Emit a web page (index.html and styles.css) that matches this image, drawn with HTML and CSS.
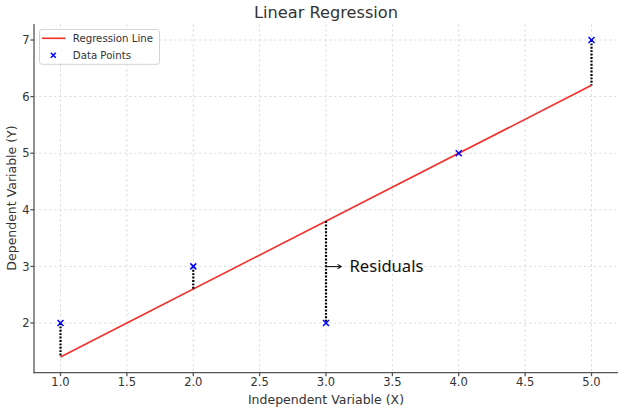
FILE: index.html
```html
<!DOCTYPE html>
<html lang="en">
<head>
<meta charset="utf-8">
<title>Linear Regression</title>
<link rel="stylesheet" href="styles.css">
</head>
<body>
<figure class="figure">
<svg class="chart" width="624" height="412" viewBox="0 0 624 412" xmlns="http://www.w3.org/2000/svg">
  <!-- grid -->
  <g class="grid">
    <line x1="60.5" y1="24" x2="60.5" y2="372.5"/>
    <line x1="126.9" y1="24" x2="126.9" y2="372.5"/>
    <line x1="193.3" y1="24" x2="193.3" y2="372.5"/>
    <line x1="259.6" y1="24" x2="259.6" y2="372.5"/>
    <line x1="326" y1="24" x2="326" y2="372.5"/>
    <line x1="392.4" y1="24" x2="392.4" y2="372.5"/>
    <line x1="458.7" y1="24" x2="458.7" y2="372.5"/>
    <line x1="525.1" y1="24" x2="525.1" y2="372.5"/>
    <line x1="591.5" y1="24" x2="591.5" y2="372.5"/>
    <line x1="34" y1="40" x2="618" y2="40"/>
    <line x1="34" y1="96.6" x2="618" y2="96.6"/>
    <line x1="34" y1="153.2" x2="618" y2="153.2"/>
    <line x1="34" y1="209.8" x2="618" y2="209.8"/>
    <line x1="34" y1="266.4" x2="618" y2="266.4"/>
    <line x1="34" y1="323" x2="618" y2="323"/>
  </g>

  <!-- regression line -->
  <line class="reg" x1="60.5" y1="357" x2="591.5" y2="85.3"/>

  <!-- residuals -->
  <g class="resid">
    <line x1="60.5" y1="323" x2="60.5" y2="357"/>
    <line x1="193.3" y1="266.4" x2="193.3" y2="289"/>
    <line x1="326" y1="221.1" x2="326" y2="323"/>
    <line x1="591.5" y1="40" x2="591.5" y2="85.3"/>
  </g>

  <!-- data points -->
  <g class="pts">
    <path d="M57.5 320 l6 6 M63.5 320 l-6 6"/>
    <path d="M190.3 263.4 l6 6 M196.3 263.4 l-6 6"/>
    <path d="M323 320 l6 6 M329 320 l-6 6"/>
    <path d="M455.7 150.2 l6 6 M461.7 150.2 l-6 6"/>
    <path d="M588.5 37 l6 6 M594.5 37 l-6 6"/>
  </g>

  <!-- annotation -->
  <g class="annot">
    <line x1="326" y1="266.6" x2="341" y2="266.6"/>
    <path d="M337.5 264.4 L341.2 266.6 L337.5 268.8"/>
  </g>
  <text class="annot-text" x="349.5" y="272.4">Residuals</text>

  <!-- spines and ticks -->
  <g class="spine">
    <line x1="34" y1="24" x2="34" y2="373.2"/>
    <line x1="33.4" y1="372.6" x2="618" y2="372.6"/>
    <line x1="60.5" y1="372.6" x2="60.5" y2="376.2"/>
    <line x1="126.9" y1="372.6" x2="126.9" y2="376.2"/>
    <line x1="193.3" y1="372.6" x2="193.3" y2="376.2"/>
    <line x1="259.6" y1="372.6" x2="259.6" y2="376.2"/>
    <line x1="326" y1="372.6" x2="326" y2="376.2"/>
    <line x1="392.4" y1="372.6" x2="392.4" y2="376.2"/>
    <line x1="458.7" y1="372.6" x2="458.7" y2="376.2"/>
    <line x1="525.1" y1="372.6" x2="525.1" y2="376.2"/>
    <line x1="591.5" y1="372.6" x2="591.5" y2="376.2"/>
    <line x1="30.4" y1="40" x2="34" y2="40"/>
    <line x1="30.4" y1="96.6" x2="34" y2="96.6"/>
    <line x1="30.4" y1="153.2" x2="34" y2="153.2"/>
    <line x1="30.4" y1="209.8" x2="34" y2="209.8"/>
    <line x1="30.4" y1="266.4" x2="34" y2="266.4"/>
    <line x1="30.4" y1="323" x2="34" y2="323"/>
  </g>

  <!-- tick labels -->
  <g class="tick tick-x">
    <text x="60.5" y="386.2">1.0</text>
    <text x="126.9" y="386.2">1.5</text>
    <text x="193.3" y="386.2">2.0</text>
    <text x="259.6" y="386.2">2.5</text>
    <text x="326" y="386.2">3.0</text>
    <text x="392.4" y="386.2">3.5</text>
    <text x="458.7" y="386.2">4.0</text>
    <text x="525.1" y="386.2">4.5</text>
    <text x="591.5" y="386.2">5.0</text>
  </g>
  <g class="tick tick-y">
    <text x="29.5" y="44.2">7</text>
    <text x="29.5" y="100.8">6</text>
    <text x="29.5" y="157.4">5</text>
    <text x="29.5" y="214">4</text>
    <text x="29.5" y="270.6">3</text>
    <text x="29.5" y="327.2">2</text>
  </g>

  <!-- labels -->
  <text class="title" x="326" y="17.6">Linear Regression</text>
  <text class="axis-label" x="326" y="403.6">Independent Variable (X)</text>
  <text class="axis-label" transform="translate(15.6 198) rotate(-90)">Dependent Variable (Y)</text>

  <!-- legend -->
  <g class="legend">
    <rect class="legend-box" x="39.5" y="29.5" width="120" height="34.8" rx="2.5"/>
    <line class="reg" x1="42" y1="38.3" x2="65.5" y2="38.3"/>
    <path class="pts-l" d="M50.8 52.8 l5 5 M55.8 52.8 l-5 5"/>
    <text class="legend-text" x="72.8" y="42">Regression Line</text>
    <text class="legend-text" x="72.8" y="58.5">Data Points</text>
  </g>
</svg>
</figure>
</body>
</html>
```

FILE: styles.css
```css
html, body {
  margin: 0;
  padding: 0;
  background: #ffffff;
}

.figure {
  margin: 0;
  width: 624px;
  height: 412px;
  overflow: hidden;
}

.chart {
  display: block;
  font-family: "DejaVu Sans", "Liberation Sans", sans-serif;
}

.grid line {
  stroke: #d6d6d6;
  stroke-width: 0.8;
  stroke-dasharray: 2.6 2.4;
}

.reg {
  stroke: #f2302a;
  stroke-width: 1.6;
}

.resid line {
  stroke: #000000;
  stroke-width: 2.2;
  stroke-dasharray: 1.9 1.5;
}

.pts path {
  stroke: #0000ff;
  stroke-width: 1.5;
  fill: none;
}

.pts-l {
  stroke: #0000ff;
  stroke-width: 1.5;
  fill: none;
}

.annot line,
.annot path {
  stroke: #111111;
  stroke-width: 1.1;
  fill: none;
}

.annot-text {
  font-family: "Noto Sans", "Open Sans", sans-serif;
  font-size: 16.6px;
  fill: #111111;
}

.spine line {
  stroke: #555555;
  stroke-width: 1.3;
}

.tick text {
  font-size: 11.5px;
  fill: #333333;
}

.tick-x text {
  text-anchor: middle;
}

.tick-y text {
  text-anchor: end;
}

.title {
  font-size: 16.2px;
  fill: #333333;
  text-anchor: middle;
}

.axis-label {
  font-size: 12.5px;
  fill: #333333;
  text-anchor: middle;
}

.legend-box {
  fill: rgba(255, 255, 255, 0.85);
  stroke: #d4d4d4;
  stroke-width: 1;
}

.legend-text {
  font-size: 10.2px;
  fill: #333333;
}
```
